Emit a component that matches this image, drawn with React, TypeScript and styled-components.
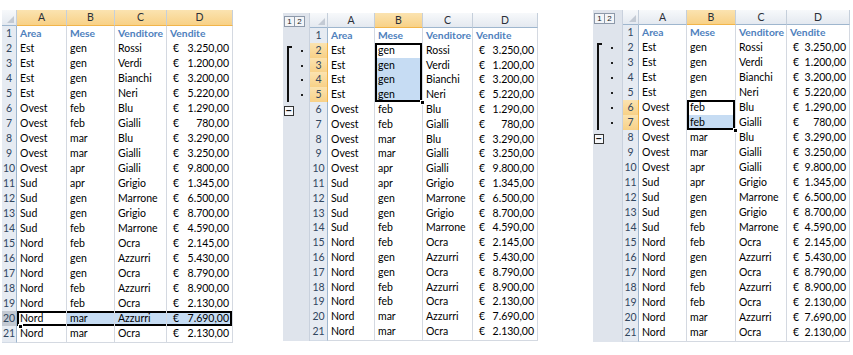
import styled, { createGlobalStyle, css } from 'styled-components';

const GlobalStyle = createGlobalStyle`
  html, body {
    margin: 0;
    padding: 0;
    background: #ffffff;
  }
  body {
    font-family: 'Lato', 'Liberation Sans', sans-serif;
    font-size: 10.5px;
    color: #000;
  }
`;

type Row = [string, string, string, string];

const rows: Row[] = [
  ['Est', 'gen', 'Rossi', '3.250,00'],
  ['Est', 'gen', 'Verdi', '1.200,00'],
  ['Est', 'gen', 'Bianchi', '3.200,00'],
  ['Est', 'gen', 'Neri', '5.220,00'],
  ['Ovest', 'feb', 'Blu', '1.290,00'],
  ['Ovest', 'feb', 'Gialli', '780,00'],
  ['Ovest', 'mar', 'Blu', '3.290,00'],
  ['Ovest', 'mar', 'Gialli', '3.250,00'],
  ['Ovest', 'apr', 'Gialli', '9.800,00'],
  ['Sud', 'apr', 'Grigio', '1.345,00'],
  ['Sud', 'gen', 'Marrone', '6.500,00'],
  ['Sud', 'gen', 'Grigio', '8.700,00'],
  ['Sud', 'feb', 'Marrone', '4.590,00'],
  ['Nord', 'feb', 'Ocra', '2.145,00'],
  ['Nord', 'gen', 'Azzurri', '5.430,00'],
  ['Nord', 'gen', 'Ocra', '8.790,00'],
  ['Nord', 'feb', 'Azzurri', '8.900,00'],
  ['Nord', 'feb', 'Ocra', '2.130,00'],
  ['Nord', 'mar', 'Azzurri', '7.690,00'],
  ['Nord', 'mar', 'Ocra', '2.130,00'],
];

const headers = ['Area', 'Mese', 'Venditore', 'Vendite'];
const letters = ['A', 'B', 'C', 'D'];

type Selection = {
  fromRow: number;
  toRow: number;
  fromCol: number;
  toCol: number;
  fullRow?: boolean;
  handle: 'bl' | 'br';
};

type SheetConfig = {
  top: number;
  gutter: number;
  widths: number[]; // row header, A, B, C, D
  rowH: number;
  headH: number;
  selection: Selection;
  outline?: { from: number; to: number };
};

const sheets: SheetConfig[] = [
  {
    top: 10,
    gutter: 0,
    widths: [15, 50, 48, 52, 66],
    rowH: 15,
    headH: 16,
    selection: { fromRow: 20, toRow: 20, fromCol: 0, toCol: 3, fullRow: true, handle: 'bl' },
  },
  {
    top: 13,
    gutter: 27,
    widths: [18, 47, 48, 50, 65],
    rowH: 14.8,
    headH: 15,
    selection: { fromRow: 2, toRow: 5, fromCol: 1, toCol: 1, handle: 'br' },
    outline: { from: 2, to: 5 },
  },
  {
    top: 10,
    gutter: 30,
    widths: [16, 48, 49, 51, 63],
    rowH: 15,
    headH: 15,
    selection: { fromRow: 6, toRow: 7, fromCol: 1, toCol: 1, handle: 'br' },
    outline: { from: 2, to: 7 },
  },
];

function App() {
  return (
    <>
      <GlobalStyle />
      <Page>
        {sheets.map((cfg, i) => (
          <Sheet key={i} cfg={cfg} />
        ))}
      </Page>
    </>
  );
}

function Sheet({ cfg }: { cfg: SheetConfig }) {
  const cols = [cfg.gutter, ...cfg.widths].filter((w) => w > 0).map((w) => `${w}px`).join(' ');
  const sel = cfg.selection;
  const inSel = (r: number, c: number) =>
    r >= sel.fromRow && r <= sel.toRow && c >= sel.fromCol && c <= sel.toCol;
  const colHl = (c: number) => c >= sel.fromCol && c <= sel.toCol;
  const rowHl = (r: number) => r >= sel.fromRow && r <= sel.toRow;

  const gutter = (r: number) => {
    if (!cfg.gutter) return null;
    const o = cfg.outline;
    if (!o) return <Gutter />;
    const grouped = r >= o.from && r <= o.to;
    return (
      <Gutter>
        {grouped && <BracketLine $first={r === o.from} />}
        {grouped && <Dot />}
        {r === o.to + 1 && <Collapse>−</Collapse>}
      </Gutter>
    );
  };

  const dataRows: (Row | null)[] = [null, ...rows];

  return (
    <SheetBox $top={cfg.top}>
      <SheetRow $cols={cols} $h={cfg.headH}>
        {cfg.gutter > 0 && (
          <Gutter>
            <LevelButtons>
              <LevelButton>1</LevelButton>
              <LevelButton>2</LevelButton>
            </LevelButtons>
          </Gutter>
        )}
        <Corner>
          <CornerTriangle />
        </Corner>
        {letters.map((l, c) => (
          <ColHead key={l} $hl={colHl(c)}>
            {l}
          </ColHead>
        ))}
      </SheetRow>
      {dataRows.map((row, idx) => {
        const r = idx + 1;
        return (
          <SheetRow key={r} $cols={cols} $h={cfg.rowH}>
            {gutter(r)}
            <RowHead $state={rowHl(r) ? (sel.fullRow ? 'full' : 'hl') : 'none'}>{r}</RowHead>
            {[0, 1, 2, 3].map((c) => {
              const s = inSel(r, c);
              const active = r === sel.fromRow && c === sel.fromCol;
              const edges = s
                ? {
                    t: r === sel.fromRow,
                    b: r === sel.toRow,
                    l: c === sel.fromCol,
                    rt: c === sel.toCol,
                  }
                : undefined;
              const handle =
                s &&
                ((sel.handle === 'br' && r === sel.toRow && c === sel.toCol) ||
                  (sel.handle === 'bl' && r === sel.toRow && c === sel.fromCol));
              return (
                <Cell key={c} $fill={s && !active} $edges={edges}>
                  {row === null ? (
                    <HeadText>{headers[c]}</HeadText>
                  ) : c === 3 ? (
                    <Money>
                      <span>€</span>
                      <span>{row[3]}</span>
                    </Money>
                  ) : (
                    row[c]
                  )}
                  {handle && <FillHandle $side={sel.handle} />}
                </Cell>
              );
            })}
          </SheetRow>
        );
      })}
      <SheetRow $cols={cols} $h={2}>
        {cfg.gutter > 0 && <Gutter />}
        <RowHead $state="none" />
        {[0, 1, 2, 3].map((c) => (
          <Cell key={c} />
        ))}
      </SheetRow>
    </SheetBox>
  );
}

const Page = styled.div`
  display: flex;
  align-items: flex-start;
  width: 853px;
  height: 355px;
  padding-left: 2px;
  gap: 50px;
  box-sizing: border-box;

  & > :nth-child(3) {
    margin-left: 5px;
  }
`;

const SheetBox = styled.div<{ $top: number }>`
  display: flex;
  flex-direction: column;
  margin-top: ${(p) => p.$top}px;
`;

const SheetRow = styled.div<{ $cols: string; $h: number }>`
  display: grid;
  grid-template-columns: ${(p) => p.$cols};
  height: ${(p) => p.$h}px;
  overflow: visible;
`;

const Gutter = styled.div`
  position: relative;
  background: #dfe4ec;
  border-right: 1px solid #c9d1dd;
`;

const LevelButtons = styled.div`
  display: flex;
  padding: 3px 0 0 1px;
`;

const LevelButton = styled.div`
  width: 9px;
  height: 9px;
  border: 1px solid #8d99aa;
  background: #f3f5f8;
  font-family: 'Liberation Sans', sans-serif;
  font-size: 8px;
  line-height: 9px;
  text-align: center;
  color: #222;
  & + & {
    border-left: none;
  }
`;

const BracketLine = styled.div<{ $first: boolean }>`
  position: absolute;
  left: 4px;
  top: ${(p) => (p.$first ? 3 : 0)}px;
  bottom: 0;
  width: 2px;
  background: #111;
  ${(p) =>
    p.$first &&
    css`
      &::after {
        content: '';
        position: absolute;
        left: 0;
        top: 0;
        width: 5px;
        height: 2px;
        background: #111;
      }
    `}
`;

const Dot = styled.div`
  position: absolute;
  left: 18px;
  top: 50%;
  width: 2px;
  height: 2px;
  margin-top: -1px;
  background: #222;
`;

const Collapse = styled.div`
  position: absolute;
  left: 1px;
  top: 4px;
  width: 8px;
  height: 8px;
  border: 1px solid #333;
  background: #f6f7f9;
  font-family: 'Liberation Sans', sans-serif;
  font-size: 10px;
  line-height: 7px;
  text-align: center;
  font-weight: bold;
  color: #111;
`;

const Corner = styled.div`
  position: relative;
  background: linear-gradient(#f7f9fb, #e4e9f0);
  border-right: 1px solid #c5cfdb;
  border-bottom: 1px solid #9eb6ce;
`;

const CornerTriangle = styled.div`
  position: absolute;
  right: 2px;
  bottom: 2px;
  width: 0;
  height: 0;
  border-left: 7px solid transparent;
  border-bottom: 7px solid #c3cad4;
`;

const ColHead = styled.div<{ $hl: boolean }>`
  box-sizing: border-box;
  border-right: 1px solid #c5cfdb;
  border-bottom: 1px solid ${(p) => (p.$hl ? '#f2b54a' : '#9eb6ce')};
  background: ${(p) =>
    p.$hl ? 'linear-gradient(#fbe3b0, #f8d187)' : 'linear-gradient(#f7f9fb, #e4e9f0)'};
  color: #2a2f38;
  text-align: center;
  font-size: 10.5px;
  line-height: 14px;
`;

const rowHeadBg = {
  none: '#e6ebf2',
  hl: 'linear-gradient(#fbe3b0, #f8d187)',
  full: '#c3c9d2',
};

const RowHead = styled.div<{ $state?: 'none' | 'hl' | 'full' }>`
  box-sizing: border-box;
  background: ${(p) => rowHeadBg[p.$state ?? 'none']};
  border-right: 1px solid ${(p) => (p.$state === 'hl' ? '#f2b54a' : '#9eb6ce')};
  border-bottom: 1px solid ${(p) => (p.$state === 'hl' ? '#f0c46f' : '#d3dbe6')};
  color: #31465f;
  text-align: center;
  font-size: 10.5px;
  line-height: 14px;
  overflow: hidden;
`;

type Edges = { t: boolean; b: boolean; l: boolean; rt: boolean };

const edgeShadow = (e?: Edges) => {
  if (!e) return 'none';
  const parts: string[] = [];
  if (e.t) parts.push('inset 0 2px 0 #000');
  if (e.b) parts.push('inset 0 -2px 0 #000');
  if (e.l) parts.push('inset 2px 0 0 #000');
  if (e.rt) parts.push('inset -2px 0 0 #000');
  return parts.length ? parts.join(', ') : 'none';
};

const Cell = styled.div<{ $fill?: boolean; $edges?: Edges }>`
  position: relative;
  box-sizing: border-box;
  border-right: 1px solid #d4d9e1;
  border-bottom: 1px solid #d4d9e1;
  background: ${(p) => (p.$fill ? '#c6dcf3' : '#fff')};
  box-shadow: ${(p) => edgeShadow(p.$edges)};
  padding: 0 3px;
  line-height: 15px;
  white-space: nowrap;
  overflow: visible;
`;

const HeadText = styled.span`
  font-weight: bold;
  color: #4f81bd;
  font-size: 10.3px;
`;

const Money = styled.div`
  display: flex;
  justify-content: space-between;
  padding-left: 3px;
`;

const FillHandle = styled.div<{ $side: 'bl' | 'br' }>`
  position: absolute;
  bottom: -3px;
  ${(p) => (p.$side === 'br' ? 'right: -3px;' : 'left: 1px;')}
  width: 5px;
  height: 5px;
  background: #000;
  border: 1px solid #fff;
  box-sizing: border-box;
  z-index: 2;
`;

export default App;
